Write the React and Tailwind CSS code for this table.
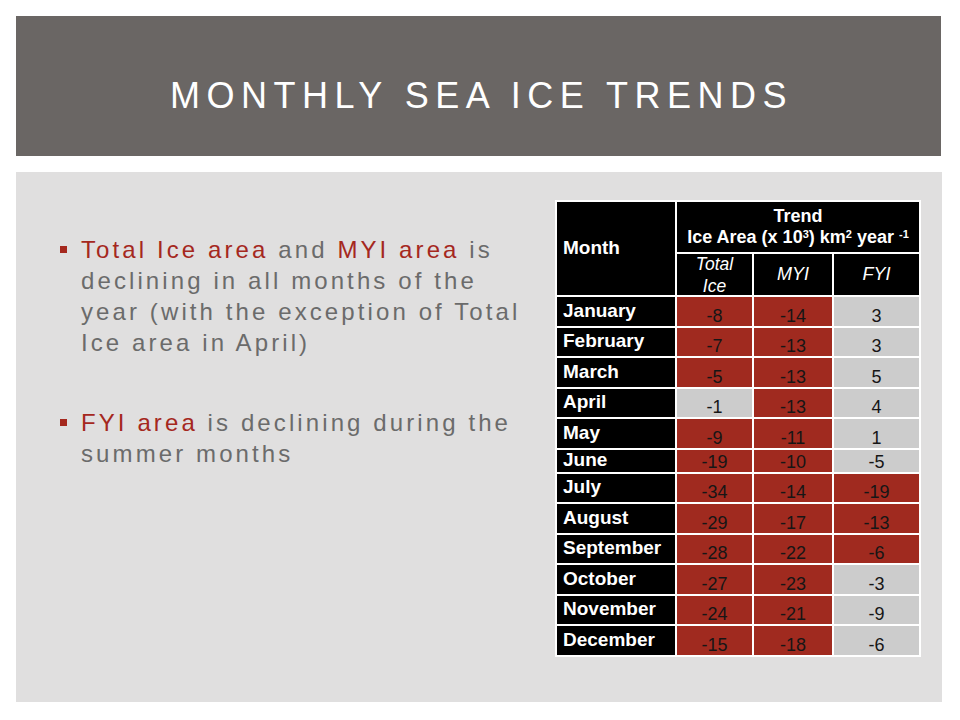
import React from "react";

const RED = "bg-[#a02a1f]";
const GREY = "bg-[#cccccc]";

const rows = [
  ["January", [-8, "r"], [-14, "r"], [3, "g"]],
  ["February", [-7, "r"], [-13, "r"], [3, "g"]],
  ["March", [-5, "r"], [-13, "r"], [5, "g"]],
  ["April", [-1, "g"], [-13, "r"], [4, "g"]],
  ["May", [-9, "r"], [-11, "r"], [1, "g"]],
  ["June", [-19, "r"], [-10, "r"], [-5, "g"]],
  ["July", [-34, "r"], [-14, "r"], [-19, "r"]],
  ["August", [-29, "r"], [-17, "r"], [-13, "r"]],
  ["September", [-28, "r"], [-22, "r"], [-6, "r"]],
  ["October", [-27, "r"], [-23, "r"], [-3, "g"]],
  ["November", [-24, "r"], [-21, "r"], [-9, "g"]],
  ["December", [-15, "r"], [-18, "r"], [-6, "g"]],
];

function Cell({ v, c }) {
  return (
    <div
      className={`${c === "r" ? RED : GREY} flex items-end justify-center pb-[1px] text-[18px] leading-[18px] text-[#161616]`}
    >
      {v}
    </div>
  );
}

export default function App() {
  return (
    <div className="w-[960px] h-[720px] bg-white pt-4 px-4 flex flex-col gap-[16px]" style={{ fontFamily: '"Liberation Sans", Arial, sans-serif' }}>
      <div className="h-[140px] w-[925px] bg-[#6a6664] flex items-center justify-center">
        <h1 className="text-white text-[36px] tracking-[6.5px] font-normal pt-[20px] pl-[6px]">MONTHLY SEA ICE TRENDS</h1>
      </div>
      <div className="h-[530px] w-[926px] bg-[#e0dfdf] flex">
        <div className="w-[539px] pl-[44px] pt-[62px] text-[24px] leading-[31px] tracking-[3.1px] text-[#6b6b6b]">
          <div className="flex">
            <span className="w-[21px] shrink-0 pt-[12px]">
              <span className="block w-[7px] h-[7px] bg-[#a5281e]" />
            </span>
            <p className="w-[450px]">
              <span className="text-[#a5281e]">Total Ice area</span> and <span className="text-[#a5281e]">MYI area</span> is declining in all months of the year (with the exception of Total Ice area in April)
            </p>
          </div>
          <div className="flex mt-[49px]">
            <span className="w-[21px] shrink-0 pt-[12px]">
              <span className="block w-[7px] h-[7px] bg-[#a5281e]" />
            </span>
            <p className="w-[450px]">
              <span className="text-[#a5281e]">FYI area</span> is declining during the summer months
            </p>
          </div>
        </div>
        <div className="pt-[28px]">
          <div
            className="grid bg-white p-[2px] gap-[2px] w-[366px]"
            style={{
              gridTemplateColumns: "118px 75px 78px 85px",
              gridTemplateRows: "50px 41px repeat(5, 28.5px) 22px repeat(6, 28.5px)",
            }}
          >
            <div className="row-span-2 bg-black text-white font-bold text-[19px] flex items-center pl-[6px]">Month</div>
            <div className="col-span-3 bg-black text-white font-bold text-[18px] leading-[21px] flex flex-col items-center justify-center">
              <span>Trend</span>
              <span>
                Ice Area (x 10<sup className="text-[11px]">3</sup>) km<sup className="text-[11px]">2</sup> year <sup className="text-[11px]">-1</sup>
              </span>
            </div>
            <div className="bg-black text-white italic text-[17.5px] leading-[22px] flex items-center justify-center text-center">
              Total
              <br />
              Ice
            </div>
            <div className="bg-black text-white italic text-[18px] flex items-center justify-center">MYI</div>
            <div className="bg-black text-white italic text-[18px] flex items-center justify-center">FYI</div>
            {rows.map(([m, a, b, c]) => (
              <React.Fragment key={m}>
                <div className="bg-black text-white font-bold text-[19px] leading-[19px] flex items-center pl-[6px] pb-[2px]">{m}</div>
                <Cell v={a[0]} c={a[1]} />
                <Cell v={b[0]} c={b[1]} />
                <Cell v={c[0]} c={c[1]} />
              </React.Fragment>
            ))}
          </div>
        </div>
      </div>
    </div>
  );
}
